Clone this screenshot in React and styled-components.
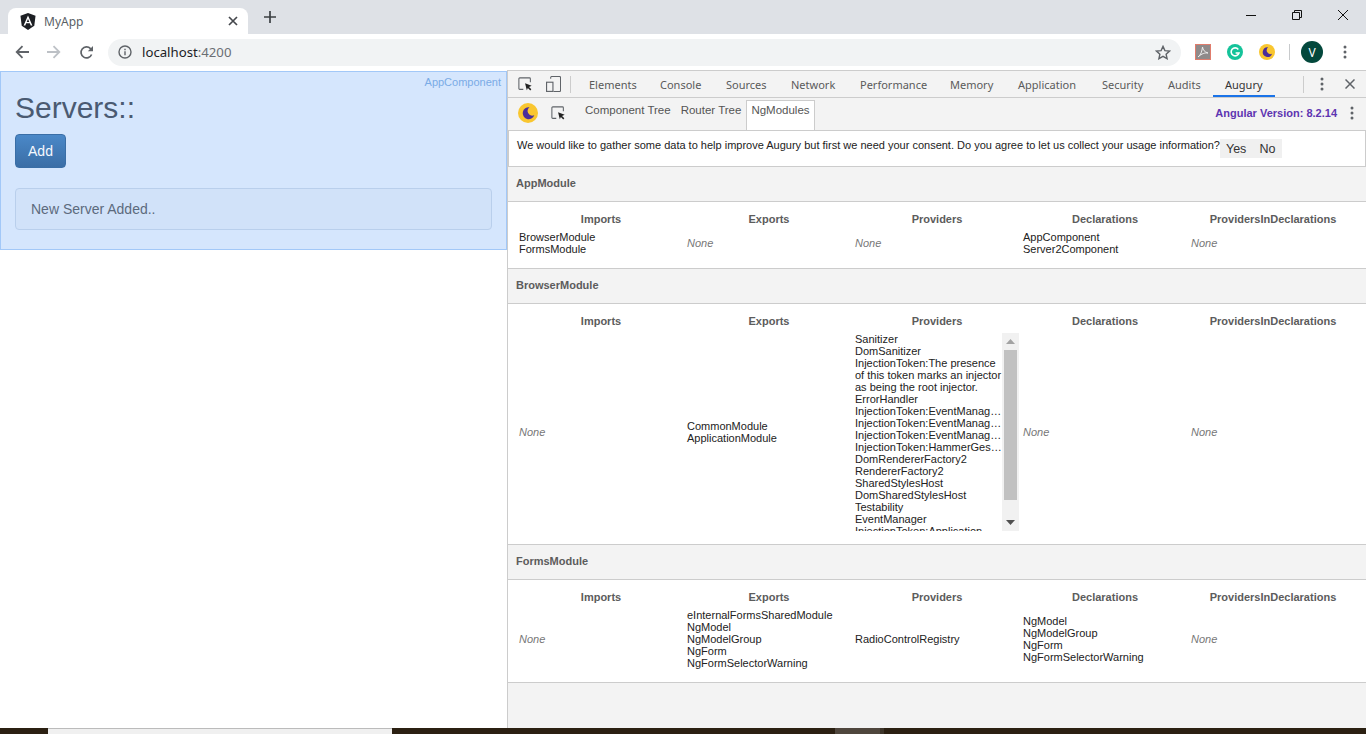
import React from "react";
import styled, { createGlobalStyle } from "styled-components";

const GlobalStyle = createGlobalStyle`
  html, body { margin: 0; padding: 0; height: 100%; overflow: hidden; background: #fff; }
  #root { height: 734px; }
  * { box-sizing: border-box; }
`;

const Page = styled.div`
  display: flex;
  flex-direction: column;
  width: 1366px;
  height: 734px;
  font-family: "Liberation Sans", Arial, sans-serif;
`;

const TabStrip = styled.div`
  display: flex;
  align-items: flex-end;
  height: 34px;
  background: #dee1e6;
  padding-left: 8px;
`;

const BrowserTab = styled.div`
  display: flex;
  align-items: center;
  width: 240px;
  height: 26px;
  margin-top: 8px;
  padding: 0 10px 0 12px;
  background: #fff;
  border-radius: 8px 8px 0 0;
  color: #5a5f66;
  font: 12px "Noto Sans", sans-serif;
`;

const TabTitle = styled.span`
  flex: 1;
  margin-left: 8px;
`;

const NewTab = styled.div`
  display: flex;
  align-items: center;
  justify-content: center;
  width: 28px;
  height: 28px;
  margin: 0 0 3px 8px;
`;

const WindowButtons = styled.div`
  display: flex;
  margin-left: auto;
  align-self: flex-start;
`;

const WindowButton = styled.div`
  display: flex;
  align-items: center;
  justify-content: center;
  width: 46px;
  height: 29px;
`;

const Toolbar = styled.div`
  display: flex;
  align-items: center;
  height: 36px;
  background: #fff;
  padding-left: 6px;
`;

const NavButton = styled.div`
  display: flex;
  align-items: center;
  justify-content: center;
  width: 32px;
  height: 28px;
  margin-left: ${(p) => p.$left || 0}px;
`;

const Omnibox = styled.div`
  display: flex;
  align-items: center;
  width: 1073px;
  height: 27px;
  margin-left: 6px;
  padding: 0 10px;
  background: #f1f3f4;
  border-radius: 14px;
`;

const Url = styled.span`
  flex: 1;
  margin-left: 10px;
  font: 13.2px "Noto Sans", sans-serif;
  color: #202124;
  span { color: #6a6e73; }
`;

const Extensions = styled.div`
  display: flex;
  align-items: center;
  margin-left: 14px;
  gap: 16px;
`;

const ToolbarDivider = styled.div`
  width: 1px;
  height: 16px;
  background: #c8cacc;
  margin: 0 11px 0 14px;
`;

const Avatar = styled.div`
  display: flex;
  align-items: center;
  justify-content: center;
  width: 22px;
  height: 22px;
  border-radius: 50%;
  background: #03483c;
  color: #fff;
  font: 12px "Noto Sans", sans-serif;
`;

const Main = styled.div`
  display: flex;
  flex: 1;
  min-height: 0;
`;

const Viewport = styled.div`
  width: 508px;
  border-right: 1px solid #ccc;
  background: #fff;
  padding-top: 1px;
`;

const Highlight = styled.div`
  position: relative;
  width: 507px;
  height: 179px;
  padding: 18px 14px 0;
  background: #d5e6fd;
  border: 1px solid #a2c8f8;
`;

const ComponentLabel = styled.span`
  position: absolute;
  top: 4px;
  right: 5px;
  font-size: 11px;
  color: #7aabe6;
`;

const Heading = styled.h1`
  margin: 0 0 8px;
  font-size: 30px;
  line-height: 36px;
  font-weight: 400;
  color: #4a5a72;
`;

const AddButton = styled.button`
  display: block;
  width: 51px;
  height: 34px;
  padding: 0;
  border: 1px solid #3a6ea6;
  border-radius: 4px;
  background: linear-gradient(#4a88c8, #3b6ea6);
  color: #f4f8fe;
  font: 14px "Liberation Sans", Arial, sans-serif;
`;

const Well = styled.div`
  width: 477px;
  height: 42px;
  margin-top: 20px;
  padding: 0 15px;
  display: flex;
  align-items: center;
  background: #d1e2f9;
  border: 1px solid #b9cfec;
  border-radius: 4px;
  font-size: 14px;
  color: #5c6a7d;
`;

const DevTools = styled.div`
  display: flex;
  flex-direction: column;
  flex: 1;
  min-width: 0;
  background: #f3f3f3;
  font-size: 11px;
`;

const PanelTabs = styled.div`
  display: flex;
  align-items: stretch;
  height: 28px;
  border-top: 1px solid #ccc;
  border-bottom: 1px solid #ccc;
  color: #5a5a5a;
  font: 11px "Noto Sans", sans-serif;
`;

const PanelIcon = styled.div`
  display: flex;
  flex-shrink: 0;
  align-items: center;
  justify-content: center;
  width: ${(p) => p.$width || 28}px;
`;

const PanelSeparator = styled.div`
  flex-shrink: 0;
  width: 1px;
  height: 17px;
  align-self: center;
  background: #ccc;
  margin: 0 ${(p) => p.$right || 6}px 0 ${(p) => p.$left || 6}px;
`;

const PanelTab = styled.div`
  display: flex;
  flex-shrink: 0;
  align-items: center;
  width: ${(p) => p.$width}px;
  padding: 1px 0 0 12px;
  white-space: nowrap;
  color: ${(p) => (p.$active ? "#333" : "#5a5a5a")};
  box-shadow: ${(p) => (p.$active ? "inset 0 -2px 0 #1a73e8" : "none")};
`;

const AuguryBar = styled.div`
  display: flex;
  align-items: flex-end;
  height: 32px;
  padding-left: 10px;
  color: #555;
`;

const AuguryIcon = styled.div`
  display: flex;
  align-items: center;
  justify-content: center;
  align-self: center;
  margin-bottom: 2px;
  width: ${(p) => p.$width}px;
`;

const AuguryTab = styled.div`
  display: flex;
  align-items: flex-start;
  height: 30px;
  padding: 3px 4px 0;
  margin: 0 ${(p) => p.$right || 0}px 0 ${(p) => p.$left || 0}px;
  font-size: 11.5px;
  color: #555;
  background: ${(p) => (p.$active ? "#fff" : "transparent")};
  border: 1px solid ${(p) => (p.$active ? "#ccc" : "transparent")};
  border-bottom: 0;
`;

const VersionLabel = styled.span`
  margin-left: auto;
  margin-bottom: 3px;
  align-self: center;
  font-weight: 700;
  color: #5e35b1;
`;

const Consent = styled.div`
  display: flex;
  align-items: flex-start;
  height: 37px;
  padding: 8px 0 0 8px;
  background: #fff;
  border: 1px solid #ccc;
  line-height: 12px;
  color: #222;
`;

const ConsentButtons = styled.div`
  display: flex;
  gap: 13px;
  height: 19px;
  padding: 0 7px 0 6px;
  align-items: center;
  background: #f0f0f0;
  font-size: 12.5px;
  color: #333;
`;

const ModuleHeader = styled.div`
  display: flex;
  align-items: center;
  height: 35px;
  padding: 0 0 2px 8px;
  background: #f3f3f3;
  border-bottom: 1px solid #ccc;
  font-weight: 700;
  color: #5c5c5c;
`;

const ModuleTable = styled.div`
  display: grid;
  grid-template-columns: repeat(5, 168px);
  grid-template-rows: 20px auto;
  align-items: center;
  padding: 9px 9px 13px;
  background: #fff;
  border-bottom: 1px solid #ccc;
`;

const ColumnTitle = styled.div`
  height: 16px;
  line-height: 16px;
  align-self: start;
  text-align: center;
  font-weight: 700;
  color: #5c5c5c;
`;

const Cell = styled.div`
  padding-left: 2px;
  line-height: 12px;
  color: #222;
`;

const NoneLabel = styled(Cell)`
  font-style: italic;
  color: #777;
`;

const ScrollCell = styled.div`
  display: flex;
  width: 164px;
  height: 198px;
  margin-left: 2px;
  line-height: 12px;
  color: #222;
`;

const ScrollList = styled.div`
  flex: 1;
  min-width: 0;
  overflow: hidden;
`;

const ListLine = styled.div`
  white-space: ${(p) => (p.$wrap ? "normal" : "nowrap")};
  overflow: hidden;
  text-overflow: ellipsis;
`;

const Scrollbar = styled.div`
  display: flex;
  flex-direction: column;
  align-items: center;
  width: 17px;
  background: #f1f1f1;
`;

const ScrollArrow = styled.div`
  display: flex;
  align-items: center;
  justify-content: center;
  width: 100%;
  height: 17px;
`;

const ScrollThumb = styled.div`
  width: 13px;
  height: 150px;
  background: #c1c1c1;
`;

const ScrollGap = styled.div`
  flex: 1;
`;

const Taskbar = styled.div`
  display: flex;
  height: 6px;
  background: #2b2012;
`;

const TaskItem = styled.div`
  width: ${(p) => p.$width}px;
  margin-left: ${(p) => p.$left}px;
  background: ${(p) => p.$color};
  border-top: ${(p) => (p.$line ? "1px solid #bbb" : "0")};
`;

const Kebab = ({ color = "#5f6368" }) => (
  <svg width="4" height="14" viewBox="0 0 4 14">
    <circle cx="2" cy="2" r="1.5" fill={color} />
    <circle cx="2" cy="7" r="1.5" fill={color} />
    <circle cx="2" cy="12" r="1.5" fill={color} />
  </svg>
);

const AuguryLogo = ({ size }) => (
  <svg width={size} height={size} viewBox="0 0 20 20">
    <circle cx="10" cy="10" r="10" fill="#f9c62f" />
    <path d="M11.5 4.2a6 6 0 1 0 4.8 8.1 5 5 0 0 1-6.2-2.2 5 5 0 0 1 1.4-5.9z" fill="#4a2c9a" />
  </svg>
);

const InspectIcon = () => (
  <svg width="15" height="15" viewBox="0 0 17 17">
    <path d="M6 14H2a1 1 0 0 1-1-1V2a1 1 0 0 1 1-1h11a1 1 0 0 1 1 1v4" fill="none" stroke="#5f6368" strokeWidth="1.2" />
    <path d="M8 7l7.5 3-3 1.3 2.600 2.700-1.200 1.200-2.700-2.700L10 15z" fill="#222" />
  </svg>
);

const modules = [
  {
    name: "AppModule",
    imports: ["BrowserModule", "FormsModule"],
    exports: [],
    providers: [],
    declarations: ["AppComponent", "Server2Component"],
  },
  {
    name: "BrowserModule",
    imports: [],
    exports: ["CommonModule", "ApplicationModule"],
    providers: null,
    declarations: [],
  },
  {
    name: "FormsModule",
    imports: [],
    exports: ["eInternalFormsSharedModule", "NgModel", "NgModelGroup", "NgForm", "NgFormSelectorWarning"],
    providers: ["RadioControlRegistry"],
    declarations: ["NgModel", "NgModelGroup", "NgForm", "NgFormSelectorWarning"],
  },
];

const browserProviders = [
  "Sanitizer",
  "DomSanitizer",
  "InjectionToken:The presence of this token marks an injector as being the root injector.",
  "ErrorHandler",
  "InjectionToken:EventManagerPlugins",
  "InjectionToken:EventManagerPlugins",
  "InjectionToken:EventManagerPlugins",
  "InjectionToken:HammerGestureConfig",
  "DomRendererFactory2",
  "RendererFactory2",
  "SharedStylesHost",
  "DomSharedStylesHost",
  "Testability",
  "EventManager",
  "InjectionToken:Application",
];

const panelTabs = [
  { label: "Elements", width: 71 },
  { label: "Console", width: 66 },
  { label: "Sources", width: 65 },
  { label: "Network", width: 69 },
  { label: "Performance", width: 90 },
  { label: "Memory", width: 68 },
  { label: "Application", width: 84 },
  { label: "Security", width: 66 },
  { label: "Audits", width: 57 },
  { label: "Augury", width: 62 },
];
const columns = ["Imports", "Exports", "Providers", "Declarations", "ProvidersInDeclarations"];

function ListCell({ items }) {
  if (!items.length) return <NoneLabel>None</NoneLabel>;
  return (
    <Cell>
      {items.map((item, i) => (
        <div key={i}>{item}</div>
      ))}
    </Cell>
  );
}

function ProvidersScroll() {
  return (
    <ScrollCell>
      <ScrollList>
        {browserProviders.map((item, i) => (
          <ListLine key={i} $wrap={i === 2}>{item}</ListLine>
        ))}
      </ScrollList>
      <Scrollbar>
        <ScrollArrow>
          <svg width="9" height="5" viewBox="0 0 9 5"><path d="M4.5 0L9 5H0z" fill="#a3a3a3" /></svg>
        </ScrollArrow>
        <ScrollThumb />
        <ScrollGap />
        <ScrollArrow>
          <svg width="9" height="5" viewBox="0 0 9 5"><path d="M0 0h9L4.5 5z" fill="#505050" /></svg>
        </ScrollArrow>
      </Scrollbar>
    </ScrollCell>
  );
}

function Module({ module }) {
  return (
    <>
      <ModuleHeader>{module.name}</ModuleHeader>
      <ModuleTable>
        {columns.map((c) => (
          <ColumnTitle key={c}>{c}</ColumnTitle>
        ))}
        <ListCell items={module.imports} />
        <ListCell items={module.exports} />
        {module.providers ? <ListCell items={module.providers} /> : <ProvidersScroll />}
        <ListCell items={module.declarations} />
        <ListCell items={[]} />
      </ModuleTable>
    </>
  );
}

export default function App() {
  return (
    <Page>
      <GlobalStyle />
      <TabStrip>
        <BrowserTab>
          <svg width="16" height="17" viewBox="0 0 16 17">
            <path d="M8 0l7.5 2.7-1.2 10L8 17l-6.3-4.3-1.2-10z" fill="#1d1f24" />
            <path d="M8 2.4L3.6 12.6h1.7l.9-2.3h3.6l.9 2.3h1.7zM8 6l1.3 3H6.7z" fill="#fff" />
          </svg>
          <TabTitle>MyApp</TabTitle>
          <svg width="10" height="10" viewBox="0 0 10 10">
            <path d="M1 1l8 8M9 1l-8 8" stroke="#45484d" strokeWidth="1.7" />
          </svg>
        </BrowserTab>
        <NewTab>
          <svg width="12" height="12" viewBox="0 0 12 12">
            <path d="M6 0v12M0 6h12" stroke="#3c4043" strokeWidth="1.7" />
          </svg>
        </NewTab>
        <WindowButtons>
          <WindowButton>
            <svg width="10" height="10" viewBox="0 0 10 10"><path d="M0 5.5h10" stroke="#111" /></svg>
          </WindowButton>
          <WindowButton>
            <svg width="10" height="10" viewBox="0 0 10 10">
              <path d="M2.5 2.5V.5h7v7h-2M.5 2.5h7v7h-7z" fill="none" stroke="#111" />
            </svg>
          </WindowButton>
          <WindowButton>
            <svg width="10" height="10" viewBox="0 0 10 10"><path d="M0 0l10 10M10 0L0 10" stroke="#111" /></svg>
          </WindowButton>
        </WindowButtons>
      </TabStrip>

      <Toolbar>
        <NavButton>
          <svg width="14" height="14" viewBox="0 0 14 14">
            <path d="M14 7H2M7.5 1.2L1.7 7l5.8 5.8" fill="none" stroke="#5f6368" strokeWidth="1.8" />
          </svg>
        </NavButton>
        <NavButton>
          <svg width="14" height="14" viewBox="0 0 14 14">
            <path d="M0 7h12M6.5 1.2L12.3 7l-5.8 5.8" fill="none" stroke="#bdc1c6" strokeWidth="1.8" />
          </svg>
        </NavButton>
        <NavButton>
          <svg width="15" height="15" viewBox="0 0 15 15">
            <path d="M12.6 9.5A5.5 5.5 0 1 1 11.5 3.6L13 5" fill="none" stroke="#5f6368" strokeWidth="1.7" />
            <path d="M14 1v5.2H8.8z" fill="#5f6368" />
          </svg>
        </NavButton>
        <Omnibox>
          <svg width="14" height="14" viewBox="0 0 14 14">
            <circle cx="7" cy="7" r="6" fill="none" stroke="#5f6368" strokeWidth="1.4" />
            <path d="M7 6.2v4M7 3.8v1.4" stroke="#5f6368" strokeWidth="1.4" />
          </svg>
          <Url>localhost<span>:4200</span></Url>
          <svg width="16" height="15" viewBox="0 0 16 15">
            <path d="M8 1.4l1.9 4.2 4.6.5-3.4 3.1 1 4.5L8 11.4l-4.1 2.3 1-4.5-3.4-3.1 4.6-.5z" fill="none" stroke="#5f6368" strokeWidth="1.4" />
          </svg>
        </Omnibox>
        <Extensions>
          <svg width="16" height="16" viewBox="0 0 16 16">
            <rect x="0.5" y="0.5" width="15" height="15" fill="#8f8a8a" stroke="#e07c6c" />
            <path d="M3 13c3-2 4-6 4.5-10 .5 3 2 5 5.5 6-3.5-.3-6 .5-10 4z" fill="none" stroke="#eee" strokeWidth="1" />
          </svg>
          <svg width="16" height="16" viewBox="0 0 16 16">
            <circle cx="8" cy="8" r="8" fill="#15c39a" />
            <path d="M11.3 5.4A4 4 0 1 0 12 9H8.6" fill="none" stroke="#fff" strokeWidth="1.6" />
          </svg>
          <AuguryLogo size={16} />
        </Extensions>
        <ToolbarDivider />
        <Avatar>V</Avatar>
        <NavButton $left={6}>
          <Kebab />
        </NavButton>
      </Toolbar>

      <Main>
        <Viewport>
          <Highlight>
            <ComponentLabel>AppComponent</ComponentLabel>
            <Heading>Servers::</Heading>
            <AddButton>Add</AddButton>
            <Well>New Server Added..</Well>
          </Highlight>
        </Viewport>

        <DevTools>
          <PanelTabs>
            <PanelIcon $width={34}><InspectIcon /></PanelIcon>
            <PanelIcon $width={22}>
              <svg width="15" height="16" viewBox="0 0 16 17">
                <path d="M5 3V1.5a1 1 0 0 1 1-1h8.5a1 1 0 0 1 1 1v14a1 1 0 0 1-1 1H8" fill="none" stroke="#5f6368" strokeWidth="1.1" />
                <rect x="0.6" y="6.6" width="6.8" height="9.800" fill="none" stroke="#5f6368" strokeWidth="1.2" />
              </svg>
            </PanelIcon>
            <PanelSeparator $left={6} $right={6} />
            {panelTabs.map((t) => (
              <PanelTab key={t.label} $width={t.width} $active={t.label === "Augury"}>{t.label}</PanelTab>
            ))}
            <PanelSeparator $left={28} $right={11} />
            <PanelIcon $width={14}><Kebab /></PanelIcon>
            <PanelIcon $width={42}>
              <svg width="10" height="10" viewBox="0 0 10 10">
                <path d="M.5.5l9 9M9.5.5l-9 9" stroke="#5f6368" strokeWidth="1.5" />
              </svg>
            </PanelIcon>
          </PanelTabs>

          <AuguryBar>
            <AuguryIcon $width={20}><AuguryLogo size={20} /></AuguryIcon>
            <AuguryIcon $width={40}><InspectIcon /></AuguryIcon>
            <AuguryTab $left={2}>Component Tree</AuguryTab>
            <AuguryTab>Router Tree</AuguryTab>
            <AuguryTab $active>NgModules</AuguryTab>
            <VersionLabel>Angular Version: 8.2.14</VersionLabel>
            <AuguryIcon $width={29}><Kebab /></AuguryIcon>
          </AuguryBar>

          <Consent>
            We would like to gather some data to help improve Augury but first we need your consent. Do you agree to let us collect your usage information?
            <ConsentButtons>
              <span>Yes</span>
              <span>No</span>
            </ConsentButtons>
          </Consent>

          {modules.map((m) => (
            <Module key={m.name} module={m} />
          ))}
        </DevTools>
      </Main>

      <Taskbar>
        <TaskItem $left={48} $width={344} $color="#f0f0f0" $line />
        <TaskItem $left={443} $width={45} $color="#4f463d" />
        <TaskItem $left={0} $width={4} $color="#3e352a" />
      </Taskbar>
    </Page>
  );
}
